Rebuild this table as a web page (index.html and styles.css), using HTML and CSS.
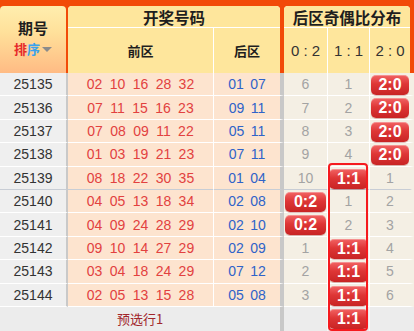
FILE: index.html
```html
<!DOCTYPE html>
<html>
<head>
<meta charset="utf-8">
<link rel="stylesheet" href="styles.css">
</head>
<body>
<div class="board">
  <div class="head">
    <div class="h-issue">
      <div class="h-issue-title">期号</div>
      <div class="h-sort"><span class="s1">排</span><span class="s2">序</span><span class="tri"></span></div>
    </div>
    <div class="h-group g-draw">
      <div class="h-title">开奖号码</div>
      <div class="h-subs">
        <div class="h-sub">前区</div>
        <div class="h-sub">后区</div>
      </div>
    </div>
    <div class="h-group g-ratio">
      <div class="h-title">后区奇偶比分布</div>
      <div class="h-subs">
        <div class="h-sub ratio">0 : 2</div>
        <div class="h-sub ratio">1 : 1</div>
        <div class="h-sub ratio">2 : 0</div>
      </div>
    </div>
  </div>

  <div class="rows">
    <div class="row">
      <div class="c-issue">25135</div>
      <div class="c-front"><span>02</span><span>10</span><span>16</span><span>28</span><span>32</span></div>
      <div class="c-back"><span>01</span><span>07</span></div>
      <div class="c-r">6</div><div class="c-r">1</div><div class="c-r c-end"><div class="badge">2:0</div></div>
    </div>
    <div class="row">
      <div class="c-issue">25136</div>
      <div class="c-front"><span>07</span><span>11</span><span>15</span><span>16</span><span>23</span></div>
      <div class="c-back"><span>09</span><span>11</span></div>
      <div class="c-r">7</div><div class="c-r">2</div><div class="c-r c-end"><div class="badge">2:0</div></div>
    </div>
    <div class="row">
      <div class="c-issue">25137</div>
      <div class="c-front"><span>07</span><span>08</span><span>09</span><span>11</span><span>22</span></div>
      <div class="c-back"><span>05</span><span>11</span></div>
      <div class="c-r">8</div><div class="c-r">3</div><div class="c-r c-end"><div class="badge">2:0</div></div>
    </div>
    <div class="row">
      <div class="c-issue">25138</div>
      <div class="c-front"><span>01</span><span>03</span><span>19</span><span>21</span><span>23</span></div>
      <div class="c-back"><span>07</span><span>11</span></div>
      <div class="c-r">9</div><div class="c-r">4</div><div class="c-r c-end"><div class="badge">2:0</div></div>
    </div>
    <div class="row sep">
      <div class="c-issue">25139</div>
      <div class="c-front"><span>08</span><span>18</span><span>22</span><span>30</span><span>35</span></div>
      <div class="c-back"><span>01</span><span>04</span></div>
      <div class="c-r">10</div><div class="c-r"><div class="badge">1:1</div></div><div class="c-r c-end">1</div>
    </div>
    <div class="row">
      <div class="c-issue">25140</div>
      <div class="c-front"><span>04</span><span>05</span><span>13</span><span>18</span><span>34</span></div>
      <div class="c-back"><span>02</span><span>08</span></div>
      <div class="c-r"><div class="badge">0:2</div></div><div class="c-r">1</div><div class="c-r c-end">2</div>
    </div>
    <div class="row">
      <div class="c-issue">25141</div>
      <div class="c-front"><span>04</span><span>09</span><span>24</span><span>28</span><span>29</span></div>
      <div class="c-back"><span>02</span><span>10</span></div>
      <div class="c-r"><div class="badge">0:2</div></div><div class="c-r">2</div><div class="c-r c-end">3</div>
    </div>
    <div class="row">
      <div class="c-issue">25142</div>
      <div class="c-front"><span>09</span><span>10</span><span>14</span><span>27</span><span>29</span></div>
      <div class="c-back"><span>02</span><span>09</span></div>
      <div class="c-r">1</div><div class="c-r"><div class="badge">1:1</div></div><div class="c-r c-end">4</div>
    </div>
    <div class="row">
      <div class="c-issue">25143</div>
      <div class="c-front"><span>03</span><span>04</span><span>18</span><span>24</span><span>29</span></div>
      <div class="c-back"><span>07</span><span>12</span></div>
      <div class="c-r">2</div><div class="c-r"><div class="badge">1:1</div></div><div class="c-r c-end">5</div>
    </div>
    <div class="row">
      <div class="c-issue">25144</div>
      <div class="c-front"><span>02</span><span>05</span><span>13</span><span>15</span><span>28</span></div>
      <div class="c-back"><span>05</span><span>08</span></div>
      <div class="c-r">3</div><div class="c-r"><div class="badge">1:1</div></div><div class="c-r c-end">6</div>
    </div>
    <div class="row prow">
      <div class="c-pre">预选行1</div>
      <div class="c-g"></div><div class="c-g"><div class="badge">1:1</div></div><div class="c-g c-end"></div>
    </div>
  </div>

  <div class="streak"></div>
</div>
</body>
</html>
```

FILE: styles.css
```css
* { box-sizing: border-box; }
html, body { margin: 0; padding: 0; }
body {
  width: 414px;
  height: 331px;
  overflow: hidden;
  background: #fff;
  font-family: "Liberation Sans", Arial, "Noto Sans CJK SC", sans-serif;
}
.board { position: relative; width: 414px; }

/* ---------- header ---------- */
.head {
  display: flex;
  height: 73px;
  padding: 6px 4px 0 0;
  background: #f24a08;
}
.h-issue {
  width: 66px;
  border-radius: 4px 4px 0 0;
  background: linear-gradient(#ffeeae, #ffe09a 40%, #ffbb84);
  display: flex;
  flex-direction: column;
  align-items: center;
  padding-top: 12px;
}
.h-issue-title {
  font-family: "Noto Sans CJK SC", sans-serif;
  font-weight: 700;
  font-size: 15px;
  line-height: 20px;
  color: #1e1e1e;
}
.h-sort {
  display: flex;
  align-items: center;
  margin-top: 2px;
  font-family: "Noto Sans CJK SC", sans-serif;
  font-weight: 700;
  font-size: 13px;
  line-height: 18px;
}
.h-sort .s1 { color: #e62a2a; }
.h-sort .s2 { color: #3aa2ec; }
.h-sort .tri {
  width: 0; height: 0;
  margin-left: 2px;
  border-left: 5px solid transparent;
  border-right: 5px solid transparent;
  border-top: 5px solid #8b8b8b;
}
.h-group {
  display: grid;
  grid-template-rows: 21px 45px;
  row-gap: 1px;
  background: #fff;
  border-radius: 4px 4px 0 0;
  overflow: hidden;
}
.g-draw { margin-left: 2px; width: 212px; }
.g-ratio { margin-left: 4px; width: 126px; }
.h-title {
  display: flex;
  align-items: center;
  justify-content: center;
  background: #fee69c;
  font-family: "Noto Sans CJK SC", sans-serif;
  font-weight: 700;
  font-size: 15.5px;
  color: #1e1e1e;
}
.h-subs { display: grid; column-gap: 1px; }
.g-draw .h-subs { grid-template-columns: 145px 66px; }
.g-ratio .h-subs { grid-template-columns: 43px 41px 40px; }
.h-sub {
  display: flex;
  align-items: center;
  justify-content: center;
  background: #fee69c;
  font-family: "Noto Sans CJK SC", sans-serif;
  font-weight: 700;
  font-size: 13px;
  color: #1e1e1e;
}
.h-sub.ratio {
  font-family: "Liberation Sans", Arial, sans-serif;
  font-weight: 400;
  font-size: 15px;
  color: #333;
}

/* ---------- rows ---------- */
.row {
  display: grid;
  grid-template-columns: 68px 146px 70px 44px 42px 44px;
  height: 23.4px;
}
.row > div {
  display: flex;
  align-items: center;
  justify-content: center;
  border-bottom: 1px solid #fff;
  font-size: 14px;
}
.row.sep > div { border-bottom: 2px solid #c8cdd5; }
.c-issue { background: #efefef; border-right: 2px solid #c9c9c9; color: #333; }
.c-front { background: #fde4cf; border-right: 1px solid #fff; color: #e2413f; }
.c-front span { margin: 0 3.7px; }
.c-back { background: #fde4cf; border-right: 4px solid #c8c8c8; color: #2f63c9; }
.c-back span { margin: 0 3.2px; }
.c-r { background: #f4efe4; border-right: 1px solid #fff; color: #a3a3a3; }
.c-end { border-right: 4px solid #f4efe4 !important; }

.row > div > .badge { align-self: flex-start; }
.badge {
  width: calc(100% - 2px);
  height: 20px;
  margin-top: 2px;
  border-radius: 5px;
  background: linear-gradient(#f26464, #de3636 45%, #c82424);
  box-shadow: inset 0 1px 0 rgba(255, 255, 255, 0.3), 0 1px 0 rgba(140, 0, 0, 0.25);
  color: #fff;
  font-size: 16px;
  font-weight: 700;
  line-height: 20px;
  text-align: center;
}

.prow { height: 24px; }
.prow > div { border-bottom: 0; background: #ececec; }
.prow .c-pre {
  grid-column: span 3;
  border-right: 4px solid #c8c8c8;
  color: #a1262b;
  font-family: "Noto Sans CJK SC", sans-serif;
  font-size: 13px;
}
.prow .c-g { border-right: 1px solid #f7f7f7; }
.prow .c-end { border-right: 4px solid #ececec !important; }

/* highlight frame over the 1:1 streak */
.streak {
  position: absolute;
  left: 328px;
  top: 163px;
  width: 40px;
  height: 168px;
  border: 2px solid #f51a1e;
  border-radius: 4px;
}
```
